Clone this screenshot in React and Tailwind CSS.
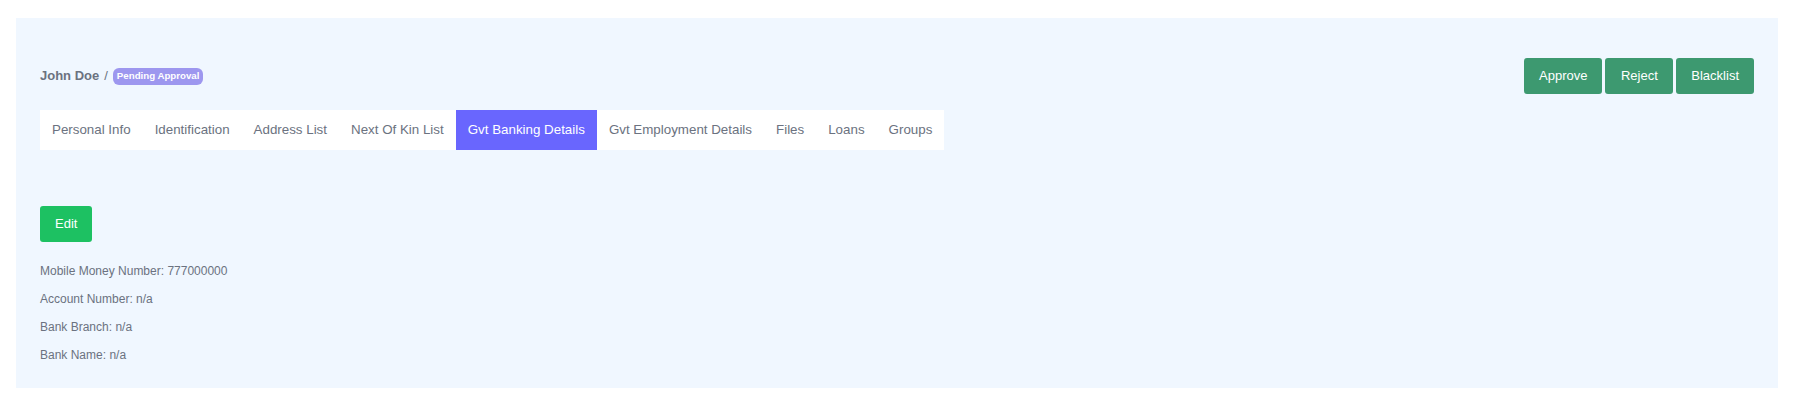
import { useState } from 'react';

const tabs = [
  'Personal Info',
  'Identification',
  'Address List',
  'Next Of Kin List',
  'Gvt Banking Details',
  'Gvt Employment Details',
  'Files',
  'Loans',
  'Groups',
];

const details = [
  ['Mobile Money Number', '777000000'],
  ['Account Number', 'n/a'],
  ['Bank Branch', 'n/a'],
  ['Bank Name', 'n/a'],
];

function App() {
  const [active, setActive] = useState('Gvt Banking Details');

  return (
    <div className="min-h-screen bg-white pt-[18px] pl-4 pr-[19px] font-['Liberation_Sans',Arial,sans-serif]">
      <div className="bg-[#f0f7ff] px-6 pt-10 pb-[25px]">
        {/* Header row */}
        <div className="flex items-center justify-between">
          <div className="flex items-center">
            <span className="text-[13px] font-bold text-[#6b7280]">John Doe</span>
            <span className="ml-[5px] mr-[5px] text-[13px] text-[#6b7280]">/</span>
            <span className="rounded-[6px] bg-[#9d97ef] px-[4px] h-[17px] flex items-center text-[9.7px] font-bold text-white">
              Pending Approval
            </span>
          </div>
          <div className="flex gap-[3px]">
            <button className="h-9 rounded-[3px] bg-[#3d9970] px-[15px] text-[13px] text-white">
              Approve
            </button>
            <button className="h-9 rounded-[3px] bg-[#3d9970] px-[15.5px] text-[13px] text-white">
              Reject
            </button>
            <button className="h-9 rounded-[3px] bg-[#3d9970] px-[15px] text-[13px] text-white">
              Blacklist
            </button>
          </div>
        </div>

        {/* Tabs */}
        <div className="mt-4 flex w-fit bg-white">
          {tabs.map((t) => (
            <button
              key={t}
              onClick={() => setActive(t)}
              className={
                t === active
                  ? 'h-10 px-3 text-[13.35px] bg-[#6966fe] text-white'
                  : 'h-10 px-3 text-[13.35px] text-[#6b7280]'
              }
            >
              {t}
            </button>
          ))}
        </div>

        {/* Content */}
        <div className="mt-14">
          <button className="h-9 rounded-[3px] bg-[#1dc162] px-[15px] text-[13px] text-white">
            Edit
          </button>
          <div className="mt-[21px] space-y-3">
            {details.map(([label, value]) => (
              <p key={label} className="text-xs leading-4 text-[#6b7280]">
                {label}: {value}
              </p>
            ))}
          </div>
        </div>
      </div>
    </div>
  );
}

export default App;
